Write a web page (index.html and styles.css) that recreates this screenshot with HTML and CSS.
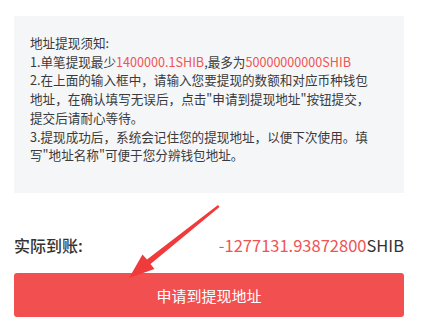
FILE: index.html
```html
<!DOCTYPE html>
<html lang="zh-CN">
<head>
  <meta charset="UTF-8">
  <meta name="viewport" content="width=device-width, initial-scale=1.0">
  <title>提现地址</title>
  <link rel="stylesheet" href="styles.css">
</head>
<body>

  <div class="page">
    <div class="notice">
      <p>地址提现须知:</p>
      <p>1.单笔提现最少<span class="red">1400000.1SHIB</span>,最多为<span class="red">50000000000SHIB</span></p>
      <p>2.在上面的输入框中，请输入您要提现的数额和对应币种钱包<br>地址，在确认填写无误后，点击"申请到提现地址"按钮提交，<br>提交后请耐心等待。</p>
      <p>3.提现成功后，系统会记住您的提现地址，以便下次使用。填<br>写"地址名称"可便于您分辨钱包地址。</p>
    </div>

    <div class="receive">
      <span class="receive-label">实际到账:</span>
      <span class="receive-value"><span class="red">-1277131.93872800</span>SHIB</span>
    </div>

    <button class="submit">申请到提现地址</button>

    <svg class="arrow" width="438" height="327" viewBox="0 0 438 327">
      <polygon points="218,205 219.5,207 150.5,264 154.5,269 129,278 142.5,254.5 147,259.5" fill="#ef3b3b"/>
    </svg>
  </div>

</body>
</html>
```

FILE: styles.css
```css
body {
  margin: 0;
  padding: 0;
  background: #ffffff;
  font-family: 'Noto Sans CJK SC', 'Noto Sans', sans-serif;
  color: #333333;
}

.page {
  position: relative;
  width: 438px;
  height: 327px;
  padding: 16px 34px 0 14px;
  box-sizing: border-box;
  overflow: hidden;
}

.notice {
  background: #f5f6f8;
  height: 177px;
  padding: 18px 10px 0 16px;
  box-sizing: border-box;
  font-size: 12.6px;
  line-height: 18.7px;
  color: #3a3a3a;
  white-space: nowrap;
}

.notice p {
  margin: 0;
}

.red {
  color: #ef5454;
}

.receive {
  display: flex;
  justify-content: space-between;
  align-items: center;
  height: 24px;
  margin-top: 40px;
  font-size: 16px;
}

.receive-label {
  font-weight: 500;
  color: #333333;
}

.receive-value {
  font-size: 16.5px;
  color: #333333;
}

.submit {
  display: block;
  width: 100%;
  height: 44px;
  margin-top: 16px;
  border: none;
  border-radius: 3px;
  background: #f25050;
  color: #ffffff;
  font-family: inherit;
  font-size: 15px;
}

.arrow {
  position: absolute;
  left: 0;
  top: 0;
  pointer-events: none;
}
```
